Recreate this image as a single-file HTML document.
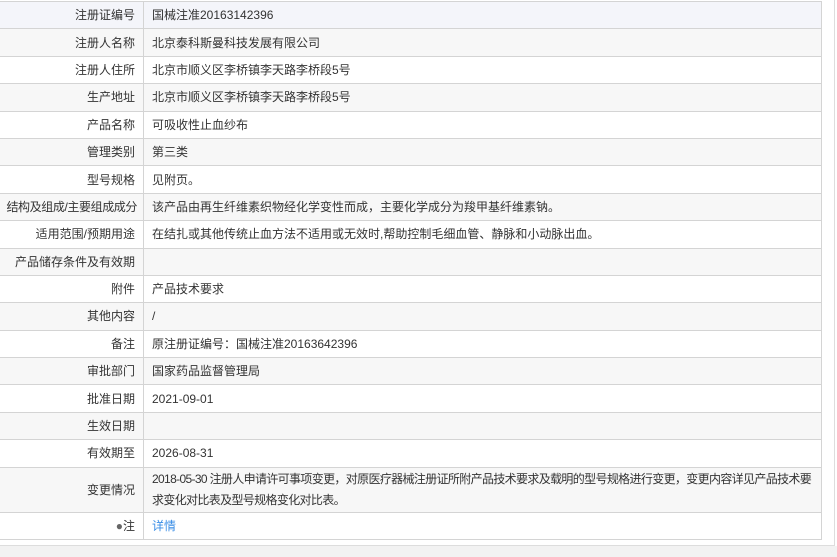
<!DOCTYPE html>
<html><head><meta charset="utf-8"><style>
body{margin:0;width:837px;height:557px;background:#fff;font-family:"Liberation Sans","Noto Sans CJK SC",sans-serif;font-size:12px;color:#333;overflow:hidden;position:relative}
.wrap{position:absolute;left:0;top:0;width:834px;height:545px;border-right:1px solid #ddd;border-bottom:1px solid #ddd;background:#fff}
.bot{position:absolute;left:0;top:546px;width:837px;height:11px;background:#f2f2f2}
table{position:absolute;left:-1px;top:1px;width:823px;border-collapse:collapse;table-layout:fixed}
td{border:1px solid #d4d4d4;padding:0 8px;height:26.4px;line-height:20px;vertical-align:middle;white-space:nowrap;overflow:hidden}
td.l{width:127px;text-align:right}
tr:nth-child(even) td{background:#f7f7f7}
tr:first-child td{background:#f4f5fa}
a{color:#3a8ee6;text-decoration:none}
</style></head><body>
<div class="wrap"></div><div class="bot"></div>
<table>
<tr><td class="l">注册证编号</td><td>国械注准20163142396</td></tr>
<tr><td class="l">注册人名称</td><td>北京泰科斯曼科技发展有限公司</td></tr>
<tr><td class="l">注册人住所</td><td>北京市顺义区李桥镇李天路李桥段5号</td></tr>
<tr><td class="l">生产地址</td><td>北京市顺义区李桥镇李天路李桥段5号</td></tr>
<tr><td class="l">产品名称</td><td>可吸收性止血纱布</td></tr>
<tr><td class="l">管理类别</td><td>第三类</td></tr>
<tr><td class="l">型号规格</td><td>见附页。</td></tr>
<tr><td class="l" style="padding:0 6px 0 0;letter-spacing:-0.4px">结构及组成/主要组成成分</td><td>该产品由再生纤维素织物经化学变性而成，主要化学成分为羧甲基纤维素钠。</td></tr>
<tr><td class="l">适用范围/预期用途</td><td>在结扎或其他传统止血方法不适用或无效时,帮助控制毛细血管、静脉和小动脉出血。</td></tr>
<tr><td class="l">产品储存条件及有效期</td><td></td></tr>
<tr><td class="l">附件</td><td>产品技术要求</td></tr>
<tr><td class="l">其他内容</td><td>/</td></tr>
<tr><td class="l">备注</td><td>原注册证编号：国械注准20163642396</td></tr>
<tr><td class="l">审批部门</td><td>国家药品监督管理局</td></tr>
<tr><td class="l">批准日期</td><td>2021-09-01</td></tr>
<tr><td class="l">生效日期</td><td></td></tr>
<tr><td class="l">有效期至</td><td>2026-08-31</td></tr>
<tr><td class="l" style="height:44px">变更情况</td><td style="line-height:21px;letter-spacing:-0.65px">2018-05-30 注册人申请许可事项变更，对原医疗器械注册证所附产品技术要求及载明的型号规格进行变更，变更内容详见产品技术要<br>求变化对比表及型号规格变化对比表。</td></tr>
<tr><td class="l"><span style="color:#666">●</span>注</td><td><a>详情</a></td></tr>
</table>
</body></html>
